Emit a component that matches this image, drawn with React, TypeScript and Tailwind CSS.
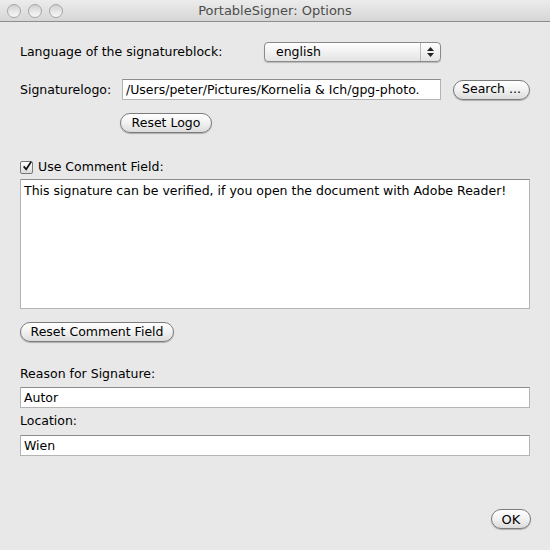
import React, { useState } from 'react';

const font = "font-['DejaVu_Sans','Liberation_Sans',sans-serif]";

function AquaButton({ children, className = '' }: { children: React.ReactNode; className?: string }) {
  return (
    <button
      className={`h-[20px] rounded-full border border-[#7b7b7b] bg-gradient-to-b from-[#ffffff] via-[#f1f1f1] to-[#dcdcdc] text-[12.5px] leading-none text-black shadow-[0_1px_1px_rgba(0,0,0,0.25)] ${className}`}
    >
      {children}
    </button>
  );
}

function TextField({ value, className = '' }: { value: string; className?: string }) {
  return (
    <div
      className={`flex h-[21px] items-center overflow-hidden whitespace-nowrap border border-[#b4b4b4] border-t-[#8c8c8c] bg-white pl-[3px] text-[12.5px] leading-[16px] text-black ${className}`}
    >
      {value}
    </div>
  );
}

export default function App() {
  const [useComment, setUseComment] = useState(true);

  return (
    <div className={`flex h-[550px] w-[550px] flex-col bg-[#e8e8e8] text-[12.5px] leading-[16px] ${font}`}>
      {/* Title bar */}
      <div className="relative flex h-[22px] shrink-0 items-center justify-center border-b border-[#8e8e8e] bg-gradient-to-b from-[#ececec] to-[#d6d6d6]">
        <div className="absolute left-[7px] top-[4px] flex gap-[7px]">
          {[0, 1, 2].map((i) => (
            <div
              key={i}
              className="h-[14px] w-[14px] rounded-full border border-[#a5a5a5] bg-gradient-to-b from-[#cfcfcf] via-[#e6e6e6] to-[#f8f8f8]"
            />
          ))}
        </div>
        <span className="text-[13px] text-[#4d4d4d]">PortableSigner: Options</span>
      </div>

      <div className="flex flex-1 flex-col px-[20px]">
        {/* Language */}
        <div className="mt-[20px] flex h-[20px] items-center">
          <span className="w-[244px] text-black">Language of the signatureblock:</span>
          <div className="flex h-[20px] w-[177px] items-center rounded-[4px] border border-[#8a8a8a] bg-gradient-to-b from-[#ffffff] to-[#e4e4e4] shadow-[0_1px_1px_rgba(0,0,0,0.2)]">
            <span className="flex-1 pl-[11px] text-black">english</span>
            <div className="flex h-full w-[20px] flex-col items-center justify-center gap-[2px] border-l border-[#b8b8b8]">
              <svg width="7" height="4" viewBox="0 0 7 4"><path d="M3.5 0L7 4H0z" fill="#222" /></svg>
              <svg width="7" height="4" viewBox="0 0 7 4"><path d="M0 0h7L3.5 4z" fill="#222" /></svg>
            </div>
          </div>
        </div>

        {/* Signature logo */}
        <div className="mt-[17px] flex items-center">
          <span className="w-[102px] text-black">Signaturelogo:</span>
          <TextField value="/Users/peter/Pictures/Kornelia & Ich/gpg-photo." className="w-[319px]" />
          <AquaButton className="ml-[12px] w-[77px]">Search ...</AquaButton>
        </div>

        <div className="mt-[13px] flex">
          <AquaButton className="ml-[100px] w-[92px]">Reset Logo</AquaButton>
        </div>

        {/* Comment field */}
        <label className="mt-[26px] flex h-[16px] cursor-pointer items-center gap-[5px]">
          <span
            onClick={() => setUseComment(!useComment)}
            className="flex h-[13px] w-[13px] items-center justify-center rounded-[2px] border border-[#777] bg-gradient-to-b from-white to-[#dcdcdc]"
          >
            {useComment && (
              <svg width="12" height="12" viewBox="0 0 12 12" className="-mt-[2px] ml-[1px]">
                <path d="M2 6.5L5 10L11 1" fill="none" stroke="#111" strokeWidth="2" />
              </svg>
            )}
          </span>
          <span className="text-black">Use Comment Field:</span>
        </label>

        <div className="mt-[4px] h-[130px] w-[510px] border border-[#b4b4b4] border-t-[#8c8c8c] bg-white px-[3px] pt-[3px] text-black">
          This signature can be verified, if you open the document with Adobe Reader!
        </div>

        <div className="mt-[13px] flex">
          <AquaButton className="w-[154px]">Reset Comment Field</AquaButton>
        </div>

        {/* Reason */}
        <span className="mt-[24px] text-black">Reason for Signature:</span>
        <TextField value="Autor" className="mt-[5px] w-[510px]" />

        <span className="mt-[5px] text-black">Location:</span>
        <TextField value="Wien" className="mt-[6px] w-[510px]" />

        <div className="mt-auto mb-[21px] flex justify-end">
          <AquaButton className="mr-[-1px] w-[40px] text-[13px]">OK</AquaButton>
        </div>
      </div>
    </div>
  );
}
